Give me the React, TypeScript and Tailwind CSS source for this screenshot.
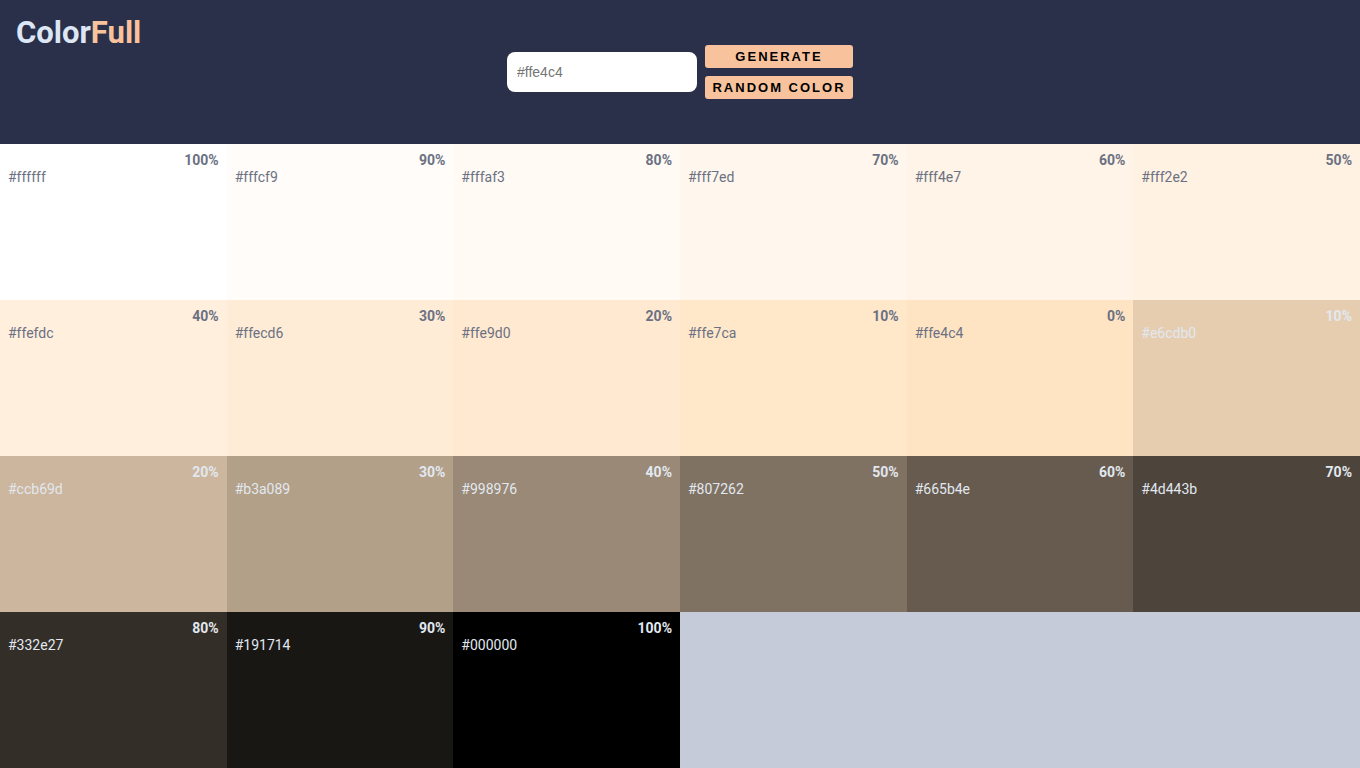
import React from "react";

type Swatch = { hex: string; pct: string; dark: boolean };

const swatches: Swatch[] = [
  { hex: "#ffffff", pct: "100%", dark: false },
  { hex: "#fffcf9", pct: "90%", dark: false },
  { hex: "#fffaf3", pct: "80%", dark: false },
  { hex: "#fff7ed", pct: "70%", dark: false },
  { hex: "#fff4e7", pct: "60%", dark: false },
  { hex: "#fff2e2", pct: "50%", dark: false },
  { hex: "#ffefdc", pct: "40%", dark: false },
  { hex: "#ffecd6", pct: "30%", dark: false },
  { hex: "#ffe9d0", pct: "20%", dark: false },
  { hex: "#ffe7ca", pct: "10%", dark: false },
  { hex: "#ffe4c4", pct: "0%", dark: false },
  { hex: "#e6cdb0", pct: "10%", dark: true },
  { hex: "#ccb69d", pct: "20%", dark: true },
  { hex: "#b3a089", pct: "30%", dark: true },
  { hex: "#998976", pct: "40%", dark: true },
  { hex: "#807262", pct: "50%", dark: true },
  { hex: "#665b4e", pct: "60%", dark: true },
  { hex: "#4d443b", pct: "70%", dark: true },
  { hex: "#332e27", pct: "80%", dark: true },
  { hex: "#191714", pct: "90%", dark: true },
  { hex: "#000000", pct: "100%", dark: true },
];

function Tile({ s }: { s: Swatch }) {
  const color = s.dark ? "text-[#e2e8f0]" : "text-[#6b7183]";
  return (
    <div className={`h-[156px] px-2 pt-[7px] ${color}`} style={{ backgroundColor: s.hex }}>
      <p className="text-right text-[14px] font-bold leading-[18px]">{s.pct}</p>
      <p className="text-[14px] leading-[16px]">{s.hex}</p>
    </div>
  );
}

export default function App() {
  return (
    <div className="min-h-[768px] bg-[#c6cbd9] font-['Roboto',sans-serif]">
      <header className="grid h-[144px] grid-cols-[1fr_auto_1fr] bg-[#2a3049]">
        <h1 className="self-start pl-4 pt-[13px] text-[31px] font-bold leading-[40px]">
          <span className="text-[#dde6f5]">Color</span>
          <span className="text-[#f8c39c]">Full</span>
        </h1>
        <div className="flex items-center gap-2">
          <input
            placeholder="#ffe4c4"
            className="h-10 w-[190px] rounded-lg bg-white px-[10px] font-['Liberation_Sans',Arial,sans-serif] text-[14px] text-[#333] outline-none placeholder:text-[#757575]"
          />
          <div className="flex flex-col gap-2">
            <button className="h-[23px] w-[148px] rounded-[3px] bg-[#f8c39c] font-['Liberation_Sans',Arial,sans-serif] text-[13px] font-bold tracking-[2px] text-black">
              GENERATE
            </button>
            <button className="h-[23px] w-[148px] rounded-[3px] bg-[#f8c39c] font-['Liberation_Sans',Arial,sans-serif] text-[13px] font-bold tracking-[2px] text-black">
              RANDOM COLOR
            </button>
          </div>
        </div>
        <div />
      </header>
      <main className="grid grid-cols-6">
        {swatches.map((s, i) => (
          <Tile key={i} s={s} />
        ))}
      </main>
    </div>
  );
}
